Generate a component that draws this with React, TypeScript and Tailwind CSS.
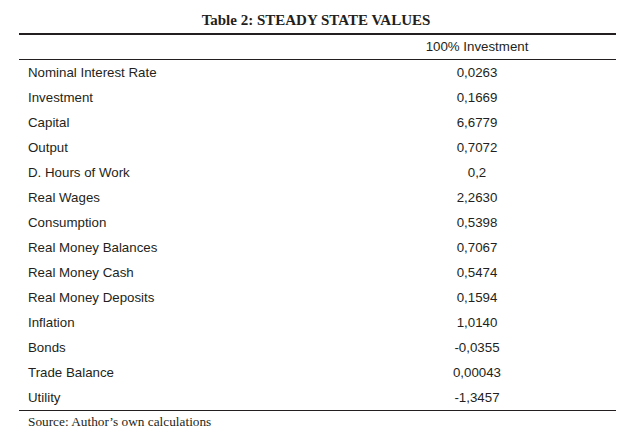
const rows: [string, string][] = [
  ['Nominal Interest Rate', '0,0263'],
  ['Investment', '0,1669'],
  ['Capital', '6,6779'],
  ['Output', '0,7072'],
  ['D. Hours of Work', '0,2'],
  ['Real Wages', '2,2630'],
  ['Consumption', '0,5398'],
  ['Real Money Balances', '0,7067'],
  ['Real Money Cash', '0,5474'],
  ['Real Money Deposits', '0,1594'],
  ['Inflation', '1,0140'],
  ['Bonds', '-0,0355'],
  ['Trade Balance', '0,00043'],
  ['Utility', '-1,3457'],
];

export default function App() {
  return (
    <div className="w-[632px] h-[431px] bg-white text-[#231f20] overflow-hidden">
      <div className="pt-[10px] h-[33px] text-center font-['Liberation_Serif',serif] font-bold text-[15px] leading-[20px]">
        Table 2: STEADY STATE VALUES
      </div>

      <div className="ml-[19px] w-[597px] font-['Liberation_Sans',Arial,sans-serif] text-[13.3px]">
        <div className="border-t-2 border-[#231f20]" />
        {/* header */}
        <div className="flex h-[25px] items-center border-b border-[#231f20]">
          <div className="w-[319px]" />
          <div className="flex-1 text-center">100% Investment</div>
        </div>

        {rows.map(([label, value]) => (
          <div key={label} className="flex h-[25px] items-center">
            <div className="w-[319px] pl-[9px]">{label}</div>
            <div className="flex-1 text-center">{value}</div>
          </div>
        ))}

        <div className="border-t border-[#231f20]" />
        <div className="pl-[9px] mt-[3px] font-['Liberation_Serif',serif] text-[13.3px] leading-[16px]">
          Source: Author’s own calculations
        </div>
      </div>
    </div>
  );
}
